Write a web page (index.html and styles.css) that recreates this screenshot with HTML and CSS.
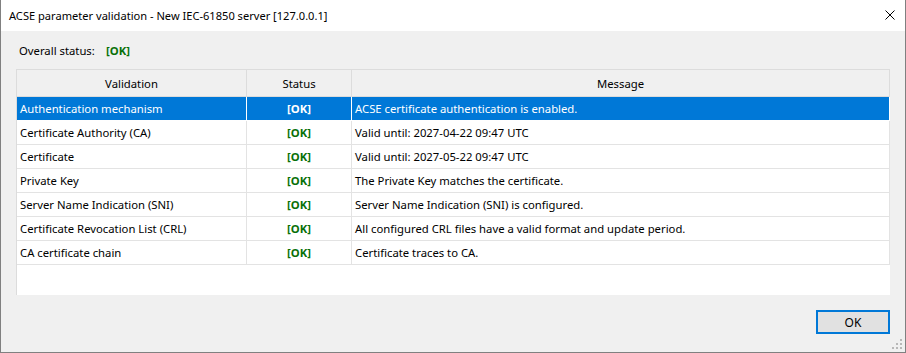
FILE: index.html
```html
<!DOCTYPE html>
<html lang="en">
<head>
    <meta charset="UTF-8">
    <title>ACSE parameter validation</title>
    <link rel="stylesheet" href="styles.css">
</head>
<body>

    <div class="window">
        <div class="titlebar">
            <span class="title">ACSE parameter validation - New IEC-61850 server [127.0.0.1]</span>
            <svg class="close" width="10" height="10" viewBox="0 0 10 10">
                <path d="M0.5 0.5 L9.5 9.5 M9.5 0.5 L0.5 9.5" stroke="#000" stroke-width="1" fill="none"/>
            </svg>
        </div>

        <div class="content">
            <div class="overall">
                <span class="overall-label">Overall status:</span>
                <span class="ok">[OK]</span>
            </div>

            <div class="grid">
                <table>
                    <thead>
                        <tr>
                            <th class="col-validation">Validation</th>
                            <th class="col-status">Status</th>
                            <th class="col-message">Message</th>
                        </tr>
                    </thead>
                    <tbody>
                        <tr class="selected">
                            <td>Authentication mechanism</td>
                            <td class="status"><span class="ok">[OK]</span></td>
                            <td>ACSE certificate authentication is enabled.</td>
                        </tr>
                        <tr>
                            <td>Certificate Authority (CA)</td>
                            <td class="status"><span class="ok">[OK]</span></td>
                            <td>Valid until: 2027-04-22 09:47 UTC</td>
                        </tr>
                        <tr>
                            <td>Certificate</td>
                            <td class="status"><span class="ok">[OK]</span></td>
                            <td>Valid until: 2027-05-22 09:47 UTC</td>
                        </tr>
                        <tr>
                            <td>Private Key</td>
                            <td class="status"><span class="ok">[OK]</span></td>
                            <td>The Private Key matches the certificate.</td>
                        </tr>
                        <tr>
                            <td>Server Name Indication (SNI)</td>
                            <td class="status"><span class="ok">[OK]</span></td>
                            <td>Server Name Indication (SNI) is configured.</td>
                        </tr>
                        <tr>
                            <td>Certificate Revocation List (CRL)</td>
                            <td class="status"><span class="ok">[OK]</span></td>
                            <td>All configured CRL files have a valid format and update period.</td>
                        </tr>
                        <tr>
                            <td>CA certificate chain</td>
                            <td class="status"><span class="ok">[OK]</span></td>
                            <td>Certificate traces to CA.</td>
                        </tr>
                    </tbody>
                </table>
            </div>

            <div class="footer">
                <button class="btn-ok">OK</button>
            </div>
        </div>

        <!-- alça de redimensionar -->
        <svg class="grip" width="12" height="12" viewBox="0 0 12 12">
            <rect x="9" y="1" width="2" height="2" fill="#b8b8b8"/>
            <rect x="5" y="5" width="2" height="2" fill="#b8b8b8"/>
            <rect x="9" y="5" width="2" height="2" fill="#b8b8b8"/>
            <rect x="1" y="9" width="2" height="2" fill="#b8b8b8"/>
            <rect x="5" y="9" width="2" height="2" fill="#b8b8b8"/>
            <rect x="9" y="9" width="2" height="2" fill="#b8b8b8"/>
        </svg>
    </div>

</body>
</html>
```

FILE: styles.css
```css
body {
    margin: 0;
    font-family: "Noto Sans", Arial, sans-serif;
    font-size: 11.3px;
    color: #000;
    background-color: #f0f0f0;
}

.window {
    position: relative;
    width: 906px;
    height: 353px;
    box-sizing: border-box;
    border: 1px solid #808080;
    border-top: none;
    background-color: #f0f0f0;
    display: flex;
    flex-direction: column;
}

.titlebar {
    height: 31px;
    background-color: #ffffff;
    display: flex;
    align-items: center;
    justify-content: space-between;
    padding: 0 10px 0 8px;
    flex-shrink: 0;
}

.title {
    font-size: 11.1px;
    padding-bottom: 1px;
}

.close {
    display: block;
    margin-bottom: 1px;
}

.content {
    padding: 0 15px;
    display: flex;
    flex-direction: column;
}

.overall {
    height: 38px;
    display: flex;
    align-items: center;
    padding-left: 3px;
}

.overall-label {
    width: 87px;
}

.ok {
    color: #087008;
    font-weight: bold;
}

.grid {
    height: 225px;
    background-color: #ffffff;
    border-top: 1px solid #dcdcdc;
    border-left: 1px solid #dcdcdc;
}

table {
    width: 873px;
    border-collapse: collapse;
    table-layout: fixed;
}

th {
    height: 26px;
    padding: 0;
    font-weight: normal;
    background-color: #f0f0f0;
    border-right: 1px solid #dcdcdc;
    border-bottom: 1px solid #dcdcdc;
    text-align: center;
}

.col-validation {
    width: 229px;
}

.col-status {
    width: 104px;
}

td {
    height: 23px;
    padding: 0 0 0 3px;
    border-right: 1px solid #e3e3e3;
    border-bottom: 1px solid #e3e3e3;
    white-space: nowrap;
    overflow: hidden;
}

td.status {
    text-align: center;
    padding: 0;
}

tr.selected td {
    background-color: #0078d7;
    color: #ffffff;
    border-right-color: #ffffff;
    border-bottom-color: #ffffff;
}

tr.selected .ok {
    color: #ffffff;
}

.footer {
    display: flex;
    justify-content: flex-end;
    padding-top: 15px;
}

.btn-ok {
    width: 74px;
    height: 24px;
    font-family: "Noto Sans", Arial, sans-serif;
    font-size: 12px;
    background-color: #e1e1e1;
    border: 2px solid #0078d7;
    padding: 0;
    color: #000;
}

.grip {
    position: absolute;
    right: 2px;
    bottom: 2px;
}
```
